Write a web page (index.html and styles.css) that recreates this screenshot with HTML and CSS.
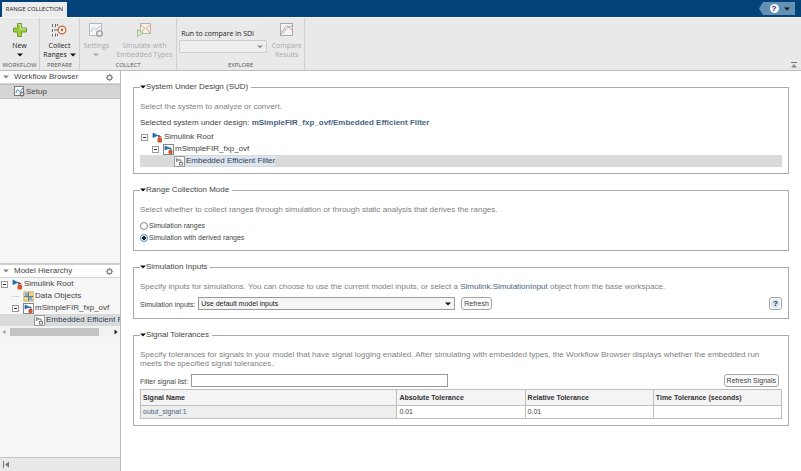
FILE: index.html
```html
<!DOCTYPE html>
<html lang="en">
<head>
<meta charset="utf-8">
<title>Range Collection</title>
<link rel="stylesheet" href="styles.css">
</head>
<body>
<svg class="defs" aria-hidden="true">
  <symbol id="i-root" viewBox="0 0 11 11"><path d="M1 1l4.500 2.500L1 5.500zM5 3.500h2.500v2" fill="#1d6fa8" stroke="#1d6fa8" stroke-width=".8"/><rect x="5.500" y="6" width="4.500" height="4.500" rx="1" fill="#d4562b"/><path d="M6.500 6V4.500h2.500V6" fill="none" stroke="#a33b17" stroke-width=".8"/></symbol>
  <symbol id="i-model" viewBox="0 0 11 11"><rect x=".5" y=".5" width="10" height="10" fill="#fff" stroke="#85898f"/><path d="M2 2l4 2-4 2zM5 4h3v2" fill="#1d6fa8" stroke="#1d6fa8" stroke-width=".8"/><rect x="5.500" y="6" width="4" height="4" rx="1" fill="#d4562b"/></symbol>
  <symbol id="i-sub" viewBox="0 0 11 11"><path d="M.5 .5h10v10H.5z" fill="#f6f6f6" stroke="#999"/><path d="M2.500 2.500l2.500 1.500-2.500 1.500zM5 4h2v2" fill="none" stroke="#666" stroke-width=".8"/><rect x="5.500" y="6.500" width="3" height="2.500" fill="#fff" stroke="#666" stroke-width=".8"/></symbol>
  <symbol id="i-gear" viewBox="0 0 9 9"><circle cx="4.500" cy="4.500" r="2.300" fill="none" stroke="#8b8b8b" stroke-width="1.400"/><path d="M4.500 .8v1M4.500 7.200v1M.8 4.500h1M7.200 4.500h1M1.800 1.800l.8 .8M6.400 6.400l.8 .8M7.200 1.800l-.8 .8M2.600 6.400l-.8 .8" stroke="#8b8b8b"/></symbol>
  <symbol id="i-down" viewBox="0 0 6 4"><path d="M0 .5h6L3 3.500z" fill="currentColor"/></symbol>
  <symbol id="i-minus" viewBox="0 0 7 7"><rect x=".5" y=".5" width="6" height="6" fill="#fff" stroke="#999"/><path d="M2 3.500h3" stroke="#333"/></symbol>
</svg>

<header class="tabbar">
  <button class="tab">RANGE COLLECTION</button>
  <button class="help-tab" aria-label="Help"><span class="help-ball">?</span><svg class="caret"><use href="#i-down"/></svg></button>
</header>

<div class="toolstrip">
  <section class="group g-workflow">
    <div class="tools">
      <button class="tool">
        <svg class="tool-icon" viewBox="0 0 16 16"><path d="M5.500 1.500h4v4.500h5v4h-5v4.500h-4V10h-4V6h4z" fill="#9ccb3c" stroke="#6f9c3a"/><path d="M6.500 2.500h2V7h5" fill="none" stroke="#d5ec9a"/></svg>
        <span>New</span><svg class="caret"><use href="#i-down"/></svg>
      </button>
    </div>
    <h2>WORKFLOW</h2>
  </section>
  <section class="group g-prepare">
    <div class="tools">
      <button class="tool">
        <svg class="tool-icon" viewBox="0 0 16 16"><g fill="none" stroke="#666"><path d="M1.500 2v3M4.500 2v3M1.500 7v3M1.500 12v2.500M4.500 11.500v3M6.500 2v2M6.500 12v2"/><path d="M3 8h4"/></g><circle cx="11" cy="8" r="3.800" fill="#fff" stroke="#c9764a" stroke-width="1.400"/><circle cx="11" cy="8" r="1.400" fill="#b8643a"/></svg>
        <span>Collect</span><span class="with-caret">Ranges <svg class="caret"><use href="#i-down"/></svg></span>
      </button>
    </div>
    <h2>PREPARE</h2>
  </section>
  <section class="group g-collect">
    <div class="tools">
      <button class="tool" disabled>
        <svg class="tool-icon" viewBox="0 0 16 16"><rect x="1.500" y="1.500" width="12" height="12" fill="#f4f6f8" stroke="#b5b9be"/><path d="M3 10c2-5 3-5 4-3s3-1 5-3" fill="none" stroke="#a9bfd2"/><circle cx="11.500" cy="11.500" r="2.800" fill="#eee" stroke="#a5a5a5" stroke-width="1.600"/></svg>
        <span>Settings</span><svg class="caret"><use href="#i-down"/></svg>
      </button>
      <button class="tool" disabled>
        <svg class="tool-icon" viewBox="0 0 16 16"><rect x="4.500" y="1.500" width="10" height="10" fill="#f7f1e9" stroke="#b9b3ad"/><path d="M5 3l4.500 4L14 3M5 11l3-4M14 11l-3-4" fill="none" stroke="#dba88c"/><path d="M1.500 7.500l5.500 3.500-5.500 3.500z" fill="#d9ebc8" stroke="#a8c48e"/></svg>
        <span>Simulate with</span><span>Embedded Types</span>
      </button>
    </div>
    <h2>COLLECT</h2>
  </section>
  <section class="group g-explore">
    <div class="tools">
      <div class="compare">
        <label for="run">Run to compare in SDI</label>
        <span class="pick disabled"><select id="run" disabled><option></option></select><svg class="caret"><use href="#i-down"/></svg></span>
      </div>
      <button class="tool" disabled>
        <svg class="tool-icon" viewBox="0 0 16 16"><rect x="1.500" y="1.500" width="12" height="12" fill="#f4f4f6" stroke="#a9a9ad"/><path d="M2 10c3 0 3-6 6-6s3 4 5 4" fill="none" stroke="#dc9a92"/><path d="M2 12c4-1 4-7 11-8" fill="none" stroke="#93b0cc"/></svg>
        <span>Compare</span><span>Results</span>
      </button>
    </div>
    <h2>EXPLORE</h2>
  </section>
  <button class="collapse" aria-label="Minimize toolstrip"><svg viewBox="0 0 6 6"><path d="M0 .5h6" stroke="#777"/><path d="M0 5.500h6L3 2z" fill="#888"/></svg></button>
</div>

<div class="work">
  <aside class="side">
    <section class="panel">
      <h2 class="panel-head"><svg class="caret"><use href="#i-down"/></svg>Workflow Browser<svg class="gear"><use href="#i-gear"/></svg></h2>
      <div class="setup"><svg class="node" viewBox="0 0 11 11"><rect x=".5" y=".5" width="9" height="9" fill="#fff" stroke="#777"/><path d="M2 7c1-4 2-4 3-2s2-1 4-3" fill="none" stroke="#2f83b5"/><circle cx="8" cy="8" r="2" fill="#ddd" stroke="#555"/></svg>Setup</div>
    </section>
    <section class="panel lower">
      <h2 class="panel-head"><svg class="caret"><use href="#i-down"/></svg>Model Hierarchy<svg class="gear"><use href="#i-gear"/></svg></h2>
      <ul class="tree">
        <li><svg class="exp"><use href="#i-minus"/></svg><svg class="node"><use href="#i-root"/></svg>Simulink Root</li>
        <li class="l1"><svg class="exp" viewBox="0 0 7 7"><path d="M0 3.500h7" stroke="#bbb" stroke-dasharray="1 1"/></svg><svg class="node" viewBox="0 0 11 11"><rect x="1" y="1" width="9" height="9" fill="#fff" stroke="#b59b4a"/><path d="M2 2h3v3H2zM6 6h3v3H6z" fill="#7fb0dc"/><path d="M6 2h3v3H6zM2 6h3v3H2z" fill="#f1d77c"/><path d="M5.500 1v9M1 5.500h9" stroke="#777"/></svg>Data Objects</li>
        <li class="l1"><svg class="exp"><use href="#i-minus"/></svg><svg class="node"><use href="#i-model"/></svg>mSimpleFIR_fxp_ovf</li>
        <li class="l2 on"><svg class="node"><use href="#i-sub"/></svg>Embedded Efficient F</li>
      </ul>
      <div class="scroll"><svg viewBox="0 0 4 6"><path d="M3.500 1v4L.5 3z" fill="#999"/></svg><i></i><svg viewBox="0 0 4 6"><path d="M.5 .5v5L3.500 3z" fill="#222"/></svg></div>
    </section>
    <div class="side-foot"><svg viewBox="0 0 8 7"><path d="M1.500 0v7" stroke="#777"/><path d="M7 .5v6L3 3.500z" fill="#777"/></svg></div>
  </aside>

  <main class="main">
    <fieldset class="box sud">
      <legend><svg class="caret"><use href="#i-down"/></svg>System Under Design (SUD)</legend>
      <p class="hint">Select the system to analyze or convert.</p>
      <p class="selected">Selected system under design: <a href="#">mSimpleFIR_fxp_ovf/Embedded Efficient Filter</a></p>
      <ul class="tree">
        <li><svg class="exp"><use href="#i-minus"/></svg><svg class="node"><use href="#i-root"/></svg>Simulink Root</li>
        <li class="l1"><svg class="exp"><use href="#i-minus"/></svg><svg class="node"><use href="#i-model"/></svg>mSimpleFIR_fxp_ovf</li>
        <li class="l2 on"><svg class="node"><use href="#i-sub"/></svg><span class="mark">Embedded Efficient Filter</span></li>
      </ul>
    </fieldset>

    <fieldset class="box mode">
      <legend><svg class="caret"><use href="#i-down"/></svg>Range Collection Mode</legend>
      <p class="hint">Select whether to collect ranges through simulation or through static analysis that derives the ranges.</p>
      <label class="radio"><input type="radio" name="mode">Simulation ranges</label>
      <label class="radio"><input type="radio" name="mode" checked>Simulation with derived ranges</label>
    </fieldset>

    <fieldset class="box inputs">
      <legend><svg class="caret"><use href="#i-down"/></svg>Simulation Inputs</legend>
      <p class="hint">Specify inputs for simulations. You can choose to use the current model inputs, or select a <a href="#">Simulink.SimulationInput</a> object from the base workspace.</p>
      <div class="row">
        <label for="inputs">Simulation inputs:</label>
        <span class="pick wide"><select id="inputs"><option>Use default model inputs</option></select><svg class="caret"><use href="#i-down"/></svg></span>
        <button class="btn">Refresh</button>
        <button class="btn help" aria-label="Help"><span class="help-ball">?</span></button>
      </div>
    </fieldset>

    <fieldset class="box signals">
      <legend><svg class="caret"><use href="#i-down"/></svg>Signal Tolerances</legend>
      <p class="hint">Specify tolerances for signals in your model that have signal logging enabled. After simulating with embedded types, the Workflow Browser displays whether the embedded run meets the specified signal tolerances.</p>
      <div class="row">
        <label for="filter">Filter signal list:</label>
        <input class="filter" id="filter" type="text">
        <button class="btn push">Refresh Signals</button>
      </div>
      <table>
        <thead><tr><th class="name">Signal Name</th><th>Absolute Tolerance</th><th>Relative Tolerance</th><th>Time Tolerance (seconds)</th></tr></thead>
        <tbody><tr><td class="sig">outut_signal:1</td><td>0.01</td><td>0.01</td><td></td></tr></tbody>
      </table>
    </fieldset>
  </main>
</div>
</body>
</html>
```
FILE: styles.css
```css
* { box-sizing: border-box; }
body {
  margin: 0;
  min-height: 100vh;
  display: flex;
  flex-direction: column;
  background: #fff;
  color: #444;
  font: 8px/10px "Liberation Sans", Arial, sans-serif;
}
h2, p, ul { margin: 0; padding: 0; font-weight: normal; font-size: 8px; }
ul { list-style: none; }
button, input, select { font: inherit; color: inherit; margin: 0; padding: 0; }
button { border: 0; background: none; }
a { color: #47647f; text-decoration: none; }
svg { flex: none; display: block; }
.defs { position: absolute; width: 0; height: 0; }
.caret { width: 6px; height: 4px; color: #111; }

.tabbar {
  height: 17px;
  display: flex;
  justify-content: space-between;
  align-items: flex-end;
  padding: 0 6px 0 2px;
  background: #04427a;
}
.tab {
  height: 15px;
  width: 65px;
  background: #ececec;
  color: #222;
  font: 6px/15px "Open Sans", sans-serif;
  white-space: nowrap;
}
.help-tab {
  width: 36px;
  height: 13px;
  margin-bottom: 2px;
  padding-left: 5px;
  display: flex;
  align-items: center;
  justify-content: center;
  gap: 5px;
  background: #6391b5;
  clip-path: polygon(4px 0, 100% 0, 100% 100%, 4px 100%, 0 50%);
}
.help-ball {
  width: 9px;
  height: 9px;
  border-radius: 50%;
  background: #f4f7fa;
  color: #1c2f42;
  font-size: 8px;
  font-weight: bold;
  line-height: 9px;
  text-align: center;
}

.toolstrip {
  height: 54px;
  display: flex;
  background: #e9e9e9;
  border-top: 1px solid #f7f7f7;
  border-bottom: 1px solid #bdbdbf;
  color: #222;
  font: 7px/9px "Open Sans", sans-serif;
}
.group {
  display: flex;
  flex-direction: column;
  justify-content: space-between;
  border-right: 1px solid #cfcfcf;
  padding-top: 4px;
}
.group h2 { font-size: 6px; line-height: 9px; text-align: center; color: #555; }
.g-workflow { width: 40px; }
.g-prepare { width: 40px; }
.g-collect { width: 97px; }
.g-explore { width: 128px; }
.tools { display: flex; justify-content: space-around; }
.tool { display: flex; flex-direction: column; align-items: center; line-height: 9px; white-space: nowrap; }
.tool-icon { width: 16px; height: 16px; margin-bottom: 3px; }
.tool > .caret { margin-top: 3px; }
.with-caret { display: flex; align-items: center; gap: 3px; }
.tool:disabled { color: #aaa; }
.tool:disabled .caret { color: #aaa; }
.compare { padding-top: 7px; }
.compare label { display: block; margin: 0 0 2px 2px; white-space: nowrap; }
.pick { position: relative; display: block; height: 13px; }
.pick select {
  appearance: none;
  width: 100%;
  height: 100%;
  padding: 0 2px;
  border: 1px solid #9a9a9a;
  border-radius: 0;
  background: #f5f5f5;
  color: #222;
  opacity: 1;
}
.pick .caret { position: absolute; right: 4px; top: 5px; pointer-events: none; }
.pick.disabled { width: 88px; }
.pick.disabled select { background: #eee; border-color: #ccc; border-radius: 2px; }
.pick.disabled .caret { color: #999; }
.collapse { margin: auto 4px 2px auto; }
.collapse svg { width: 6px; height: 6px; }

.work { flex: 1; display: flex; }
.side {
  width: 121px;
  flex: none;
  display: flex;
  flex-direction: column;
  border-right: 1px solid #b9b9c2;
  background: #f6f6f6;
}
.panel { flex: 1; overflow: hidden; }
.lower { border-top: 2px solid #cfcfcf; }
.panel-head {
  height: 13px;
  display: flex;
  align-items: center;
  gap: 5px;
  padding: 0 6px 0 3px;
  background: #fff;
  border-bottom: 1px solid #d5d5d5;
}
.panel-head .caret { color: #888; }
.gear { width: 9px; height: 9px; margin-left: auto; }
.setup {
  height: 15px;
  display: flex;
  align-items: center;
  gap: 1px;
  padding-left: 14px;
  background: #d5d5d5;
  border: 1px solid #c0c0c0;
  border-width: 1px 0;
}
.node { width: 11px; height: 11px; }
.exp { width: 7px; height: 7px; margin-right: 3px; }
.tree li {
  height: 12px;
  display: flex;
  align-items: center;
  gap: 1px;
  padding-left: 1px;
  white-space: nowrap;
}
.tree .l1 { padding-left: 12px; }
.tree .l2 { padding-left: 34px; }
.tree .on { background: #dadada; color: #2f4355; }
.mark { background: #dce4ee; }
.scroll { height: 11px; display: flex; align-items: center; padding: 0 2px; gap: 4px; background: #f2f2f2; }
.scroll svg { width: 4px; height: 6px; }
.scroll i { width: 89px; height: 8px; margin-right: auto; background: #c3c3c3; }
.side-foot { height: 14px; padding: 3px 2px; background: #e8e8e8; border-top: 1px solid #c4c4c4; }
.side-foot svg { width: 8px; height: 7px; }

.main { flex: 1; min-width: 0; padding: 11px 12px 12px; }
.box {
  margin: 0 0 11px;
  padding: 10px 6px 6px;
  border: 1px solid #a9a9ac;
  min-width: 0;
}
.box legend {
  display: flex;
  align-items: center;
  padding: 0 3px 0 0;
  line-height: 10px;
}
.hint { color: #808080; line-height: 9px; margin-bottom: 6px; }
.selected { margin: 7px 0 3px; }
.selected a { font-weight: bold; }
.radio { display: flex; align-items: center; gap: 1px; height: 12px; font-size: 7px; }
.radio input {
  appearance: none;
  width: 8px;
  height: 8px;
  border: 1px solid #888;
  border-radius: 50%;
  background: #fff;
}
.radio input:checked { border-color: #2a8fd0; background: radial-gradient(circle, #222 0 2px, #fff 2px); }
.row { display: flex; align-items: center; gap: 3px; font-size: 7px; }
.row label { padding-top: 3px; white-space: nowrap; }
.inputs { padding-bottom: 8px; }
.pick.wide { width: 257px; margin-right: 3px; }
.btn {
  height: 13px;
  padding: 0 2px;
  border: 1px solid #a5a5a5;
  border-radius: 3px;
  background: #fafafa;
  white-space: nowrap;
}
.btn.help { margin-left: auto; padding: 0 1px; }
.btn .help-ball { display: block; background: #d6e6f3; }
.push { margin: 0 3px 0 auto; }
.filter { width: 257px; height: 13px; border: 1px solid #999; background: #fff; }
table {
  width: 100%;
  margin-top: 2px;
  border-collapse: collapse;
  table-layout: fixed;
  border: 1px solid #a9a9ac;
  font-size: 7px;
}
th, td { height: 13px; padding: 0 2px; border: 1px solid #bdbdc2; text-align: left; }
th { height: 16px; background: #f4f4f4; color: #333; }
.name { width: 40%; }
.sig { background: #eee; color: #47647f; }
```
